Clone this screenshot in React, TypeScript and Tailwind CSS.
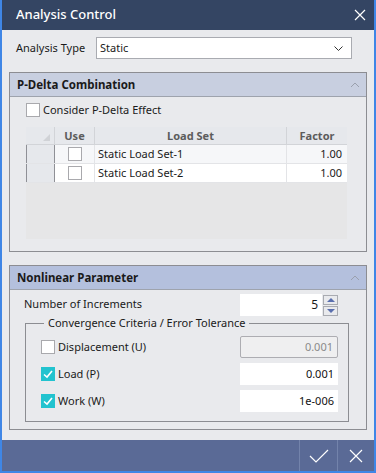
import React from 'react'

const font = { fontFamily: '"Noto Sans", "Open Sans", sans-serif' }

const Check = ({ checked = false }: { checked?: boolean }) =>
  checked ? (
    <div className="w-[14px] h-[14px] bg-[#22c3cf] flex items-center justify-center shrink-0">
      <svg width="12" height="12" viewBox="0 0 12 12">
        <polyline points="2,6.5 5,9 10,3" fill="none" stroke="#fff" strokeWidth="1.6" />
      </svg>
    </div>
  ) : (
    <div className="w-[14px] h-[14px] bg-white border border-[#a9a9ad] shrink-0" />
  )

const ChevronUp = () => (
  <svg width="10" height="6" viewBox="0 0 10 6">
    <polyline points="1,5 5,1 9,5" fill="none" stroke="#9aa0ad" strokeWidth="1" />
  </svg>
)

const GroupHeader = ({ title, dark }: { title: string; dark?: boolean }) => (
  <div
    className={`h-[24px] shrink-0 flex items-center justify-between pl-[7px] pr-[6px] border-b border-[#9ea3ad] ${
      dark ? 'bg-[#b4c0dd]' : 'bg-[#c8cfe0]'
    }`}
  >
    <span className="text-[11.5px] font-bold text-[#1a1a1a]">{title}</span>
    <ChevronUp />
  </div>
)

const rows = ['Static Load Set-1', 'Static Load Set-2']

const ValueBox = ({ value, disabled }: { value: string; disabled?: boolean }) => (
  <div
    className={`w-[98px] h-[22px] flex items-center justify-end pr-[4px] ${
      disabled
        ? 'bg-[#efeff0] border border-[#adadb2] rounded-[2px] text-[#8a8a8a]'
        : 'bg-white text-[#111]'
    }`}
  >
    {value}
  </div>
)

export default function App() {
  return (
    <div
      className="w-[376px] h-[473px] flex flex-col bg-[#e9eaed] border-x-2 border-b-2 border-[#3f86e6] overflow-hidden"
      style={font}
    >
      {/* title */}
      <div className="h-[30px] shrink-0 bg-[#344563] flex items-center justify-between pl-[14px] pr-[8px] -mx-[2px] border-l-2 border-r-2 border-[#3f86e6]">
        <span className="text-[13px] font-medium text-white">Analysis Control</span>
        <svg width="12" height="12" viewBox="0 0 12 12">
          <path d="M1 1 L11 11 M11 1 L1 11" stroke="#fff" strokeWidth="1.2" />
        </svg>
      </div>

      <div className="flex-1 flex flex-col text-[11px] leading-[14px] text-[#1a1a1a]">
        {/* analysis type */}
        <div className="flex items-center mt-[7px] pl-[14px]">
          <span className="w-[80px]">Analysis Type</span>
          <div className="w-[256px] h-[22px] bg-white border border-[#a9abb1] flex items-center justify-between pl-[3px] pr-[8px]">
            <span>Static</span>
            <svg width="9" height="5" viewBox="0 0 9 5">
              <polyline points="0.5,0.5 4.5,4.5 8.5,0.5" fill="none" stroke="#333" strokeWidth="1" />
            </svg>
          </div>
        </div>

        {/* P-Delta */}
        <div className="mt-[13px] mx-[7px] border border-[#8c8d92] h-[180px] flex flex-col">
          <GroupHeader title="P-Delta Combination" />
          <div className="flex items-center gap-[3px] mt-[6px] ml-[16px] h-[14px]">
            <Check />
            <span>Consider P-Delta Effect</span>
          </div>
          <div className="mt-[10px] ml-[16px] w-[321px] h-[112px] bg-[#e6e6e7] flex flex-col">
            <div className="flex h-[18px] bg-[#e6e8ec] border-b border-[#d2d4d8] text-[#5c5c5c] font-bold">
              <div className="w-[29px] border-r border-[#d2d4d8] flex items-end justify-end pr-[4px] pb-[3px]">
                <div className="w-0 h-0 border-l-[7px] border-l-transparent border-b-[7px] border-b-[#d0d2d6]" />
              </div>
              <div className="w-[40px] border-r border-[#d2d4d8] flex items-center justify-center">Use</div>
              <div className="w-[192px] border-r border-[#d2d4d8] flex items-center justify-center">Load Set</div>
              <div className="flex-1 flex items-center justify-center">Factor</div>
            </div>
            {rows.map((r, i) => (
              <div
                key={r}
                className={`flex h-[19px] border-b border-[#e3e4e7] ${i === 0 ? 'bg-[#f6f7f9]' : 'bg-white'}`}
              >
                <div className="w-[29px] bg-[#e6e8ec] border-l border-r border-[#8f9096]" />
                <div className="w-[40px] border-r border-[#e3e4e7] flex items-center justify-center">
                  <Check />
                </div>
                <div className="w-[192px] border-r border-[#e3e4e7] flex items-center pl-[3px]">{r}</div>
                <div className="flex-1 flex items-center justify-end pr-[5px]">1.00</div>
              </div>
            ))}
          </div>
        </div>

        {/* Nonlinear */}
        <div className="mt-[13px] mx-[7px] border border-[#8c8d92] h-[165px] flex flex-col">
          <GroupHeader title="Nonlinear Parameter" dark />
          <div className="flex items-center mt-[4px] pl-[14px]">
            <span className="w-[216px] -mt-[2px]">Number of Increments</span>
            <div className="w-[82px] h-[22px] bg-white flex items-center justify-end pr-[4px] text-[12px]">5</div>
            <div className="flex flex-col gap-[1px] ml-[1px]">
              {[0, 1].map((k) => (
                <div
                  key={k}
                  className="w-[15px] h-[10px] bg-[#e9eaed] border border-[#a9abb1] flex items-center justify-center"
                >
                  <div
                    className={`w-0 h-0 border-l-[4px] border-r-[4px] border-l-transparent border-r-transparent ${
                      k === 0 ? 'border-b-[4px] border-b-[#5a6fae]' : 'border-t-[4px] border-t-[#5a6fae]'
                    }`}
                  />
                </div>
              ))}
            </div>
          </div>
          <fieldset className="ml-[15px] mr-[17px] border border-[#8c8d92] pl-[15px] pr-[10px] pb-[7px] h-[106px]">
            <legend className="ml-[3px] px-[4px] leading-[14px]">Convergence Criteria / Error Tolerance</legend>
            <div className="flex flex-col gap-[5px] mt-[6px]">
              {[
                { l: 'Displacement (U)', v: '0.001', c: false },
                { l: 'Load (P)', v: '0.001', c: true },
                { l: 'Work (W)', v: '1e-006', c: true },
              ].map((o) => (
                <div key={o.l} className="flex items-center justify-between h-[22px]">
                  <div className="flex items-center gap-[3px]">
                    <Check checked={o.c} />
                    <span>{o.l}</span>
                  </div>
                  <ValueBox value={o.v} disabled={!o.c} />
                </div>
              ))}
            </div>
          </fieldset>
        </div>

        <div className="flex-1" />
        {/* footer */}
        <div className="h-[31px] bg-[#5a6a96] flex justify-end">
          <div className="w-[38px] border-l border-[#7383ab] flex items-center justify-center">
            <svg width="20" height="14" viewBox="0 0 20 14">
              <polyline points="1,7 7,13 19,1" fill="none" stroke="#fff" strokeWidth="1.2" />
            </svg>
          </div>
          <div className="w-[37px] border-l border-[#7383ab] flex items-center justify-center">
            <svg width="14" height="14" viewBox="0 0 14 14">
              <path d="M1 1 L13 13 M13 1 L1 13" stroke="#fff" strokeWidth="1.2" />
            </svg>
          </div>
        </div>
      </div>
    </div>
  )
}
